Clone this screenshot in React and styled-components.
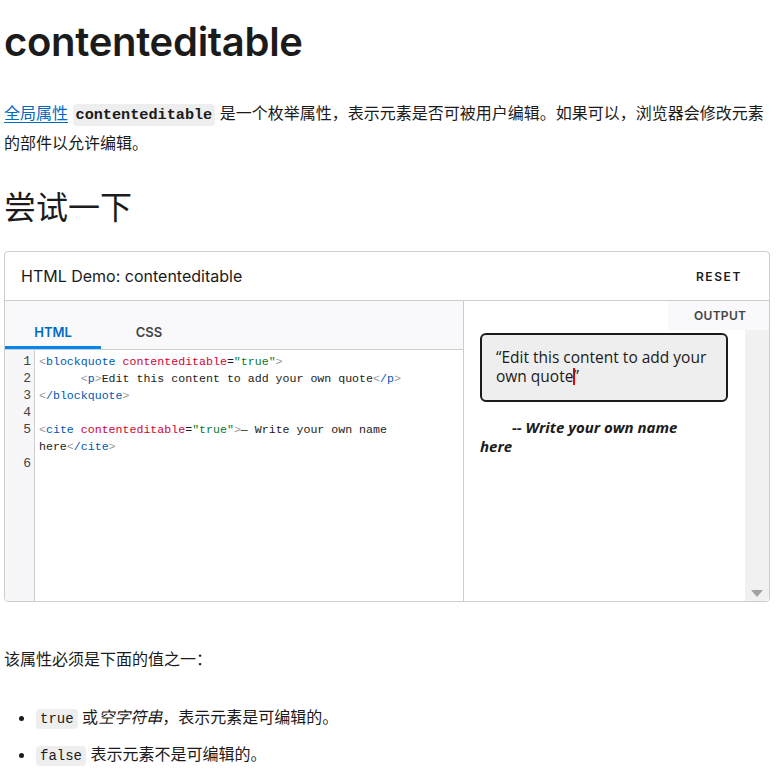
import React from 'react'
import styled, { createGlobalStyle } from 'styled-components'

const GlobalStyle = createGlobalStyle`
  body {
    margin: 0;
    background: #fff;
    color: #1b1b1b;
    font-family: Inter, "Noto Sans CJK SC", sans-serif;
  }
`

const Page = styled.div`
  padding: 0 8px 0 4px;
`

const Title = styled.h1`
  margin: 18px 0 0;
  font-size: 40px;
  line-height: 48px;
  font-weight: 600;
  letter-spacing: -0.3px;
`

const Para = styled.p`
  margin: ${(p) => p.$top || 33}px 0 0;
  font-size: 16px;
  line-height: 28px;
`

const Link = styled.a`
  color: #0069c2;
  text-decoration: underline;
  text-underline-offset: 3px;
`

const InlineCode = styled.code`
  background: #eee;
  border-radius: 4px;
  padding: ${(p) => (p.$big ? '2px 3px' : '2px 4px')};
  font-family: "Liberation Mono", monospace;
  font-size: ${(p) => (p.$big ? 15.2 : 14)}px;
  font-weight: ${(p) => (p.$big ? 700 : 400)};
`

const SubTitle = styled.h2`
  margin: 32px 0 0;
  font-size: 32px;
  line-height: 38px;
  font-weight: 400;
`

const Demo = styled.section`
  margin-top: 24px;
  border: 1px solid #cdcdcd;
  border-radius: 4px;
  height: 349px;
  display: flex;
  flex-direction: column;
  overflow: hidden;
`

const DemoHeader = styled.header`
  height: 48px;
  flex: none;
  display: flex;
  align-items: center;
  justify-content: space-between;
  padding: 0 27px 0 16px;
  border-bottom: 1px solid #cdcdcd;
`

const DemoTitle = styled.h3`
  margin: 0;
  font-size: 16px;
  font-weight: 400;
  color: #1b1b1b;
`

const Reset = styled.button`
  border: 0;
  background: none;
  padding: 0;
  font-family: Inter, sans-serif;
  font-size: 12px;
  font-weight: 600;
  letter-spacing: 1.6px;
  color: #1b1b1b;
`

const Panels = styled.div`
  flex: 1;
  display: grid;
  grid-template-columns: 459px 1fr;
  min-height: 0;
`

const Editor = styled.div`
  display: flex;
  flex-direction: column;
  border-right: 1px solid #cdcdcd;
`

const Tabs = styled.div`
  height: 48px;
  flex: none;
  display: flex;
  align-items: flex-end;
  background: #f9f9fb;
  border-bottom: 1px solid #cdcdcd;
`

const Tab = styled.div`
  width: 96px;
  height: 31px;
  box-sizing: border-box;
  text-align: center;
  font-size: 13px;
  font-weight: 600;
  color: ${(p) => (p.$active ? '#0069c2' : '#444')};
  border-bottom: 3px solid ${(p) => (p.$active ? '#0085f2' : 'transparent')};
  padding-top: 6px;
`

const CodeArea = styled.div`
  flex: 1;
  display: flex;
`

const Gutter = styled.div`
  width: 29px;
  flex: none;
  background: #f7f7f9;
  border-right: 1px solid #cdcdcd;
  padding-top: 3px;
`

const LineNo = styled.div`
  height: ${(p) => p.$rows * 17}px;
  line-height: 17px;
  text-align: right;
  padding-right: 3px;
  font-family: "Liberation Mono", monospace;
  font-size: 13px;
  color: #444;
`

const Code = styled.pre`
  margin: 0;
  padding: 3px 0 0 4px;
  flex: 1;
  font-family: "Liberation Mono", monospace;
  font-size: 11.6px;
  line-height: 17px;
  white-space: pre-wrap;
  color: #1b1b1b;
`

const Punc = styled.span`
  color: #999;
`
const Tag = styled.span`
  color: #0057b7;
`
const Attr = styled.span`
  color: #d30038;
`
const Val = styled.span`
  color: #067a2f;
`

const Output = styled.div`
  display: flex;
  flex-direction: column;
  min-height: 0;
`

const OutputTabs = styled.div`
  height: 29px;
  flex: none;
  display: flex;
  justify-content: flex-end;
`

const OutputTab = styled.div`
  width: 101px;
  background: #f9f9fb;
  display: flex;
  align-items: center;
  padding-left: 26px;
  box-sizing: border-box;
  font-size: 12px;
  font-weight: 600;
  letter-spacing: 0.3px;
  color: #444;
`

const Frame = styled.div`
  flex: 1;
  display: flex;
`

const FrameBody = styled.div`
  flex: 1;
  padding: 3px 16px 0 16px;
  font-family: "Open Sans", sans-serif;
`

const Quote = styled.blockquote`
  margin: 0;
  width: 248px;
  box-sizing: border-box;
  height: 69px;
  background: #eee;
  border: 2px solid #1b1b1b;
  border-radius: 6px;
  padding: 13px 14px 0;
  font-size: 15.5px;
  line-height: 19px;
  color: #1b1b1b;
`

const Caret = styled.span`
  display: inline-block;
  width: 2px;
  height: 17px;
  margin: 0 -2px -3px 0;
  background: #e00;
`

const Cite = styled.cite`
  display: block;
  margin-top: 16px;
  width: 230px;
  font-size: 15px;
  line-height: 19px;
  font-weight: 700;
  font-style: italic;
  text-indent: 32px;
  color: #1b1b1b;
`

const Scrollbar = styled.div`
  width: 24px;
  flex: none;
  background: #f1f1f1;
  display: flex;
  align-items: flex-end;
  justify-content: center;
  padding-bottom: 4px;
  box-sizing: border-box;
`

const List = styled.ul`
  margin: 30px 0 0;
  padding-left: 32px;
`

const Item = styled.li`
  font-size: 16px;
  line-height: 28px;
  margin-bottom: 7px;
`

const Lt = () => <Punc>&lt;</Punc>
const Gt = () => <Punc>&gt;</Punc>

export default function App() {
  return (
    <Page>
      <GlobalStyle />
      <Title>contenteditable</Title>
      <Para>
        <Link href="#">全局属性</Link> <InlineCode $big>contenteditable</InlineCode>{' '}
        是一个枚举属性，表示元素是否可被用户编辑。如果可以，浏览器会修改元素的部件以允许编辑。
      </Para>
      <SubTitle>尝试一下</SubTitle>

      <Demo>
        <DemoHeader>
          <DemoTitle>HTML Demo: contenteditable</DemoTitle>
          <Reset>RESET</Reset>
        </DemoHeader>
        <Panels>
          <Editor>
            <Tabs>
              <Tab $active>HTML</Tab>
              <Tab>CSS</Tab>
            </Tabs>
            <CodeArea>
              <Gutter>
                <LineNo $rows={1}>1</LineNo>
                <LineNo $rows={1}>2</LineNo>
                <LineNo $rows={1}>3</LineNo>
                <LineNo $rows={1}>4</LineNo>
                <LineNo $rows={2}>5</LineNo>
                <LineNo $rows={1}>6</LineNo>
              </Gutter>
              <Code>
                <Lt /><Tag>blockquote</Tag> <Attr>contenteditable</Attr>=<Val>"true"</Val><Gt />
                {'\n      '}
                <Lt /><Tag>p</Tag><Gt />Edit this content to add your own quote<Lt /><Tag>/p</Tag><Gt />
                {'\n'}
                <Lt /><Tag>/blockquote</Tag><Gt />
                {'\n\n'}
                <Lt /><Tag>cite</Tag> <Attr>contenteditable</Attr>=<Val>"true"</Val><Gt />— Write your own name here<Lt /><Tag>/cite</Tag><Gt />
                {'\n'}
              </Code>
            </CodeArea>
          </Editor>
          <Output>
            <OutputTabs>
              <OutputTab>OUTPUT</OutputTab>
            </OutputTabs>
            <Frame>
              <FrameBody>
                <Quote>
                  “Edit this content to add your own quote<Caret />”
                </Quote>
                <Cite>-- Write your own name here</Cite>
              </FrameBody>
              <Scrollbar>
                <svg width="12" height="7" viewBox="0 0 12 7">
                  <path d="M0 0h12L6 7z" fill="#a3a3a3" />
                </svg>
              </Scrollbar>
            </Frame>
          </Output>
        </Panels>
      </Demo>

      <Para $top={43}>该属性必须是下面的值之一：</Para>
      <List>
        <Item>
          <InlineCode>true</InlineCode> 或<em>空字符串</em>，表示元素是可编辑的。
        </Item>
        <Item>
          <InlineCode>false</InlineCode> 表示元素不是可编辑的。
        </Item>
      </List>
    </Page>
  )
}
